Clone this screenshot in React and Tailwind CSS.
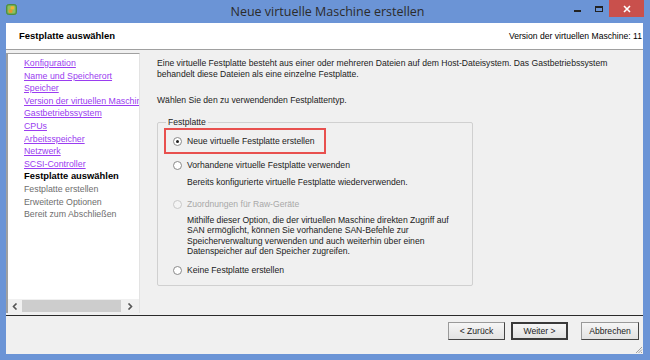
const steps = [
  { label: "Konfiguration", state: "done" },
  { label: "Name und Speicherort", state: "done" },
  { label: "Speicher", state: "done" },
  { label: "Version der virtuellen Maschine", state: "done" },
  { label: "Gastbetriebssystem", state: "done" },
  { label: "CPUs", state: "done" },
  { label: "Arbeitsspeicher", state: "done" },
  { label: "Netzwerk", state: "done" },
  { label: "SCSI-Controller", state: "done" },
  { label: "Festplatte auswählen", state: "current" },
  { label: "Festplatte erstellen", state: "todo" },
  { label: "Erweiterte Optionen", state: "todo" },
  { label: "Bereit zum Abschließen", state: "todo" },
]

export default function App() {
  return (
    <div
      className="w-[650px] h-[360px] bg-[#6b94d6] flex flex-col overflow-hidden text-[8.6px] text-[#1b1b1b]"
      style={{ fontFamily: '"Liberation Sans", Arial, sans-serif' }}
    >
      <TitleBar />

      {/* Client area */}
      <div className="ml-[6px] mr-[7px] h-[331px] bg-[#f0f0f0] flex flex-col">
        {/* Header */}
        <div className="h-[27px] bg-white border-b border-[#a0a0a0] flex items-center justify-between pl-[13px] pr-[1px]">
          <span className="font-bold text-[9.5px] text-black">Festplatte auswählen</span>
          <span className="text-black text-[8.6px]">Version der virtuellen Maschine: 11</span>
        </div>

        <div className="flex flex-1 pt-[3px]">
          {/* Steps panel */}
          <div className="w-[134px] h-[260px] bg-white border-l-2 border-t border-[#a0a0a0] border-r border-r-[#e3e3e3] flex flex-col">
            <div className="flex-1 pl-[16px] pt-[3px] overflow-hidden whitespace-nowrap text-[8.8px]">
              {steps.map((s) => (
                <div key={s.label} className="h-[12.6px] leading-[12.6px]">
                  <StepLabel step={s} />
                </div>
              ))}
            </div>
            <ScrollBar />
          </div>

          {/* Main content */}
          <div className="flex-1 pl-[17px] pt-[5px] whitespace-nowrap">
            <p className="leading-[11px]">
              Eine virtuelle Festplatte besteht aus einer oder mehreren Dateien auf dem Host-Dateisystem. Das Gastbetriebssystem
              <br />
              behandelt diese Dateien als eine einzelne Festplatte.
            </p>
            <p className="mt-[15px] leading-[11px]">Wählen Sie den zu verwendenden Festplattentyp.</p>

            <fieldset className="mt-[11px] w-[316px] h-[169px] border border-[#d0d0d0] rounded-[2px] pl-[6px] pt-[2px]">
              <legend className="px-[2px] ml-[2px] leading-[10px]">Festplatte</legend>

              <div className="w-[162px] h-[26px] border-2 border-[#e8504e] flex items-center pl-[7px] -mt-[1px]">
                <Radio checked />
                <span className="ml-[5px]">Neue virtuelle Festplatte erstellen</span>
              </div>

              <div className="pl-[9px] mt-[6px]">
                <div className="flex items-center h-[11px]">
                  <Radio />
                  <span className="ml-[5px]">Vorhandene virtuelle Festplatte verwenden</span>
                </div>
                <p className="pl-[14px] mt-[6px] leading-[11px]">Bereits konfigurierte virtuelle Festplatte wiederverwenden.</p>

                <div className="flex items-center h-[11px] mt-[11px]">
                  <Radio disabled />
                  <span className="ml-[5px] text-[#a8a8a8]">Zuordnungen für Raw-Geräte</span>
                </div>
                <p className="pl-[14px] mt-[5px] leading-[10.4px]">
                  Mithilfe dieser Option, die der virtuellen Maschine direkten Zugriff auf
                  <br />
                  SAN ermöglicht, können Sie vorhandene SAN-Befehle zur
                  <br />
                  Speicherverwaltung verwenden und auch weiterhin über einen
                  <br />
                  Datenspeicher auf den Speicher zugreifen.
                </p>

                <div className="flex items-center h-[11px] mt-[8px]">
                  <Radio />
                  <span className="ml-[5px]">Keine Festplatte erstellen</span>
                </div>
              </div>
            </fieldset>
          </div>
        </div>

        {/* Footer */}
        <div className="border-t border-[#2a2a2a] h-[39px] flex items-start justify-end pt-[6px] pr-[4px] relative">
          <Button>&lt; Zurück</Button>
          <div className="ml-[6px]">
            <Button primary>Weiter &gt;</Button>
          </div>
          <div className="ml-[13px]">
            <Button wide>Abbrechen</Button>
          </div>
          <Grip />
        </div>
      </div>
    </div>
  )
}

function TitleBar() {
  return (
    <div className="h-[23px] flex items-start">
      <div className="pl-[6px] pt-[4px] w-[60px]">
        <svg width="11" height="11" viewBox="0 0 12 12">
          <rect x="0.5" y="0.5" width="11" height="11" rx="2.5" fill="#6aa84f" stroke="#4d8a35" />
          <rect x="2" y="2" width="8" height="8" rx="1.5" fill="#8cc063" />
          <rect x="5" y="2.5" width="4" height="3.5" rx="0.8" fill="#f2b233" />
          <rect x="3" y="6" width="4" height="3.5" rx="0.8" fill="#e9962b" />
        </svg>
      </div>
      <div
        className="flex-1 text-center pt-[3px] text-[12.5px] text-[#2b2b2b] pl-[28px]"
        style={{ fontFamily: '"Open Sans", "Liberation Sans", sans-serif' }}
      >
        Neue virtuelle Maschine erstellen
      </div>
      <div className="flex items-start">
        <div className="w-[21px] h-[16px] flex items-center justify-center">
          <div className="w-[7px] h-[2px] bg-[#222] mt-[5px]" />
        </div>
        <div className="w-[21px] h-[16px] flex items-center justify-center">
          <div className="w-[8px] h-[6px] border border-[#222] border-t-2 mt-[1px]" />
        </div>
        <div className="w-[35px] h-[17px] bg-[#c9504c] flex items-center justify-center mr-[6px]">
          <svg width="8" height="8" viewBox="0 0 8 8">
            <path d="M1 1 L7 7 M7 1 L1 7" stroke="#fff" strokeWidth="1.6" />
          </svg>
        </div>
      </div>
    </div>
  )
}

function StepLabel({ step }) {
  if (step.state === "done") {
    return <span className="text-[#9a3df0] underline">{step.label}</span>
  }
  if (step.state === "current") {
    return <span className="font-bold text-black text-[9.4px]">{step.label}</span>
  }
  return <span className="text-[#6e6e6e]">{step.label}</span>
}

function ScrollBar() {
  return (
    <div className="h-[14px] bg-[#f0f0f0] flex items-center">
      <div className="w-[14px] flex justify-center">
        <svg width="6" height="7" viewBox="0 0 6 7">
          <path d="M4.5 0.5 L1.5 3.5 L4.5 6.5" stroke="#555" strokeWidth="1.6" fill="none" />
        </svg>
      </div>
      <div className="flex-1 h-[12px] bg-[#cdcdcd]" />
      <div className="w-[18px] flex justify-center">
        <svg width="6" height="7" viewBox="0 0 6 7">
          <path d="M1.5 0.5 L4.5 3.5 L1.5 6.5" stroke="#555" strokeWidth="1.6" fill="none" />
        </svg>
      </div>
    </div>
  )
}

function Radio({ checked, disabled }) {
  return (
    <span
      className={`w-[9px] h-[9px] rounded-full border flex items-center justify-center shrink-0 ${
        disabled ? "border-[#c8c8c8] bg-[#f4f4f4]" : "border-[#8a8a8a] bg-white"
      }`}
    >
      {checked && <span className="w-[3px] h-[3px] rounded-full bg-[#222]" />}
    </span>
  )
}

function Button({ primary, wide, children }) {
  return (
    <div
      className={`${wide ? "w-[58px]" : "w-[57px]"} h-[18px] flex items-center justify-center bg-gradient-to-b from-[#f6f6f6] to-[#e2e2e2] ${
        primary ? "border-2 border-[#3a3a3a]" : "border border-[#9a9a9a] border-r-[#444] border-b-[#444]"
      }`}
    >
      {children}
    </div>
  )
}

function Grip() {
  return (
    <svg className="absolute right-0 bottom-0" width="9" height="9" viewBox="0 0 9 9">
      <path d="M8 2 L2 8 M8 4.5 L4.5 8 M8 7 L7 8" stroke="#a0a0a0" strokeWidth="1" />
    </svg>
  )
}
